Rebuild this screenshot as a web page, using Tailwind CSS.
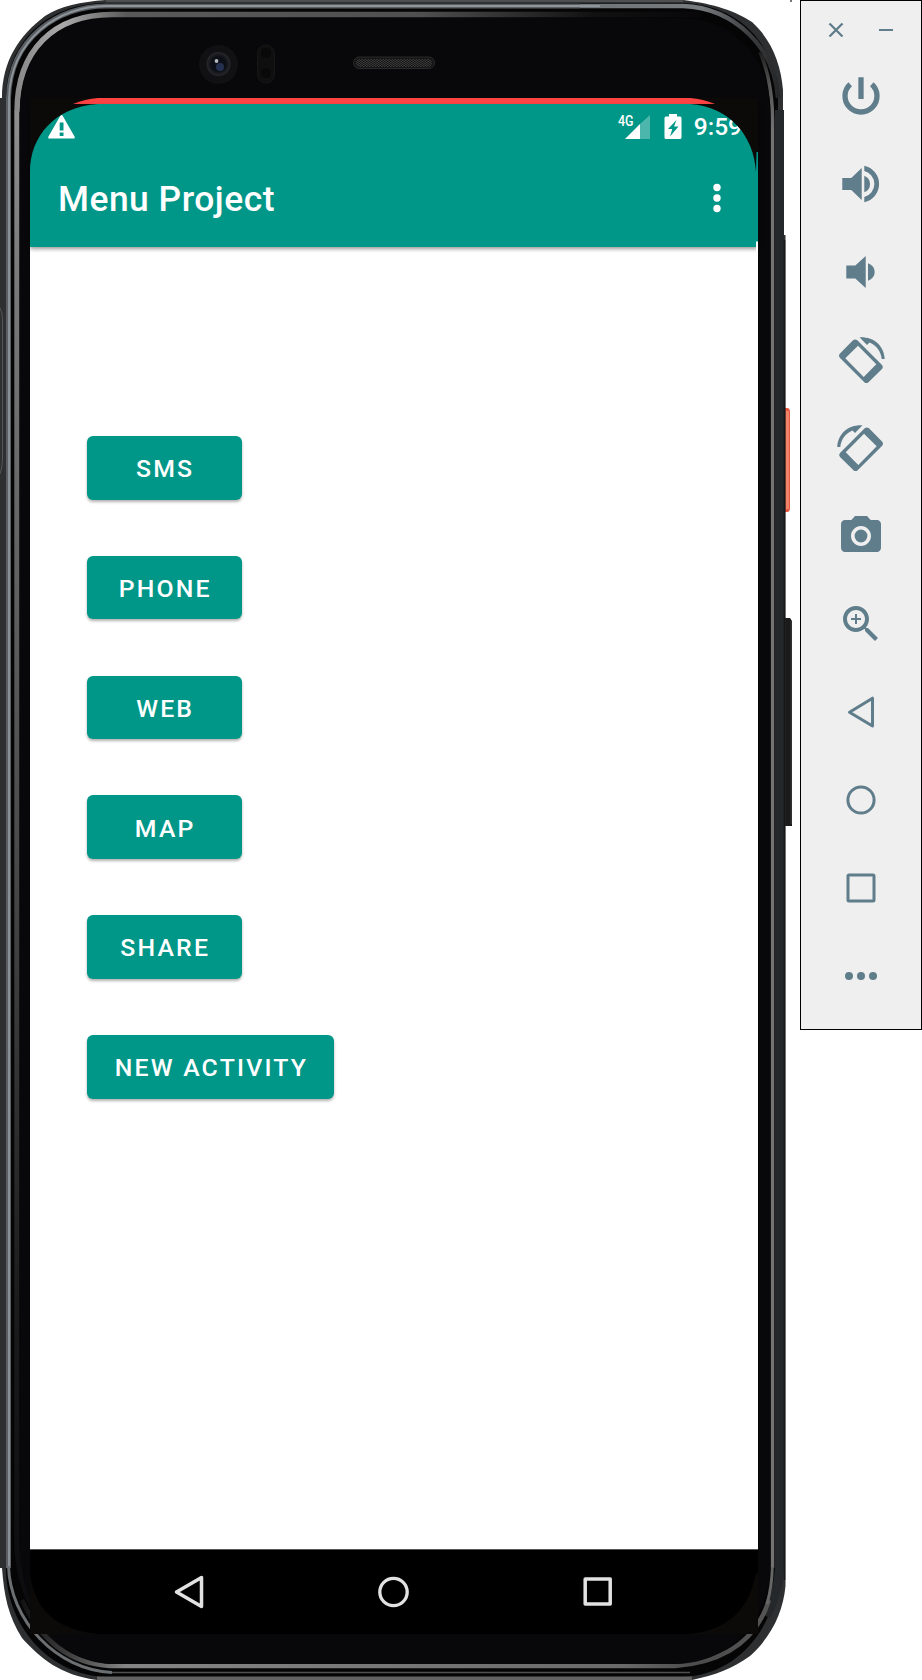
<!DOCTYPE html>
<html lang="en">
<head>
<meta charset="utf-8">
<title>Menu Project</title>
<script src="https://cdn.jsdelivr.net/npm/@tailwindcss/browser@4"></script>
</head>
<body class="bg-white font-['Roboto',sans-serif] font-medium text-white">
<div class="flex h-[1680px] w-[922px] overflow-hidden items-start">

  <!-- Phone -->
  <main class="relative isolate h-[1680px] w-[800px] shrink-0 pt-[98px] pl-[30px]">
    <svg class="absolute inset-0 -z-10" width="800" height="1680" viewBox="0 0 800 1680" fill="none">
      <defs>
        <linearGradient id="bezel" x1="0" x2="700" y1="0" y2="0" gradientUnits="userSpaceOnUse">
          <stop offset="0" stop-color="#7c7c7c"/><stop offset=".09" stop-color="#aaa"/><stop offset=".18" stop-color="#5a5a5a"/><stop offset=".6" stop-color="#505050"/><stop offset=".85" stop-color="#111"/><stop offset="1" stop-color="#08080b"/>
        </linearGradient>
        <linearGradient id="side" x1="0" x2="0" y1="112" y2="1600" gradientUnits="userSpaceOnUse">
          <stop offset="0" stop-color="#8f8f8f"/><stop offset=".1" stop-color="#7c7c7c"/><stop offset=".5" stop-color="#4a4a4a"/><stop offset=".8" stop-color="#1c1c1d"/><stop offset="1" stop-color="#0c0c0e"/>
        </linearGradient>
        <linearGradient id="rimtop" x1="580" x2="782" y1="0" y2="0" gradientUnits="userSpaceOnUse"><stop offset="0" stop-color="#6f757a"/><stop offset=".6" stop-color="#777b7e"/><stop offset=".85" stop-color="#3a3c3e"/><stop offset="1" stop-color="#222425"/></linearGradient>
        <linearGradient id="base" x1="20" x2="772" y1="0" y2="0" gradientUnits="userSpaceOnUse"><stop offset="0" stop-color="#111"/><stop offset=".07" stop-color="#444"/><stop offset=".14" stop-color="#858585"/><stop offset=".8" stop-color="#6a6a6a"/><stop offset=".9" stop-color="#4b4b4b"/><stop offset="1" stop-color="#555"/></linearGradient>
        <linearGradient id="right" x1="0" x2="0" y1="40" y2="130" gradientUnits="userSpaceOnUse"><stop offset="0" stop-color="#0a0a0b"/><stop offset=".5" stop-color="#555"/><stop offset="1" stop-color="#737373"/></linearGradient>
        <radialGradient id="lens" cx=".5" cy=".5" r=".5"><stop offset="0" stop-color="#0d0f19"/><stop offset=".6" stop-color="#0d0f17"/><stop offset="1" stop-color="#29292b"/></radialGradient>
        <pattern id="mesh" width="3" height="2" patternUnits="userSpaceOnUse"><path fill="#3a3a3a" d="M0 0h1.500v1H0zM1.500 1H3v1H1.500z"/></pattern>
      </defs>
      <!-- side buttons -->
      <path fill="#e8583f" d="M783 408h5q2 1 2 3v98q0 2-2 3h-5z"/>
      <path fill="#f2836b" d="M786 411h3v98h-3z"/>
      <path fill="#1b1b1b" d="M783 618h7l2 3v205h-9z"/>
      <path fill="#333" d="M790.500 621h1.500v203h-1.500z"/>
      <!-- body -->
      <path fill="#2d2f30" d="M0 98H2C2 60 20 35 45 16C61 6 80 2 106 0H683C715 4 735 11 752 22C772 40 781 65 783 90V235H785.500V1586C783 1612 772 1636 750 1656C732 1669 715 1675 692 1680H97C60 1675 40 1658 22 1638C8 1616 4 1595 2 1568H0Z"/>
      <path fill="#050506" d="M6 1568V98C6 42 48 3 106 3H683C740 5 776 45 778 98V1568C778 1625 740 1674 683 1677H106C48 1675 6 1625 6 1568Z"/>
      <path stroke="#585b5c" stroke-width="1.500" d="M106 1H683"/>
      <path stroke="#24282a" stroke-width="9" d="M779.500 110V1568Q778 1595 766 1616"/>
      <path stroke="#161718" stroke-width="1.500" d="M784.500 240V1580"/>
      <!-- outer rim -->
      <path stroke="#5a5e62" stroke-width="5" d="M8.500 1568V98C10 38 58 6 106 6H580"/>
      <path stroke="url(#rimtop)" stroke-width="4.500" d="M580 6H683C735 8 775 48 778 98"/>
      <path stroke="#8f969b" stroke-width="1.800" d="M9 1568V98C11 39 58 6 106 6H600"/>
      <path stroke="#6c6f71" stroke-width="3" d="M8.500 1566C10 1620 56 1670 112 1672.500"/>
      <path stroke="#505050" stroke-width="1.500" d="M112 1672.500H690"/>
      <path stroke="#626262" stroke-width="3.500" d="M97 1678.200H692"/>
      <!-- glass edge -->
      <path stroke="url(#bezel)" stroke-width="5.500" d="M17 112C17 50 54 14.500 112 14.500H700"/>
      <path stroke="url(#side)" stroke-width="5" d="M16.800 111.500V1540C17 1590 40 1630 66 1650"/>
      <path stroke="url(#base)" stroke-width="4.500" d="M22 1600Q50 1662 110 1666H675Q750 1660 769 1600"/>
      <path stroke="url(#right)" stroke-width="3.500" d="M772.500 1568V118Q772 80 760 52"/>
      <path stroke="#666" stroke-width="3" d="M772.300 1567Q772 1586 767 1604"/>
      <path fill="#08080b" d="M19.800 1540V112C21 52 56 18 112 18H683C735 19 770 60 770.500 112V1568C768 1625 725 1664 675 1664H110C60 1662 20 1615 19.800 1540Z"/>
      <!-- volume key edge on the left -->
      <path stroke="#50585a" stroke-width="1" d="M0 308Q2.500 312 2.500 320V458Q2.500 468 0 474"/>
      <!-- camera and sensors -->
      <circle cx="218.500" cy="64.500" r="19.500" fill="#111113"/>
      <circle cx="218.500" cy="64" r="12" fill="url(#lens)"/>
      <circle cx="220" cy="67" r="4" fill="#253050"/>
      <circle cx="216.500" cy="61" r="1.900" fill="#b7b7bf"/>
      <rect x="257.500" y="45" width="17" height="38" rx="8.500" fill="#0f0f10" stroke="#171718"/>
      <circle cx="266" cy="53" r="6" fill="#09090a" stroke="#131314"/><circle cx="266" cy="73" r="6" fill="#09090a" stroke="#131314"/>
      <!-- speaker -->
      <rect x="353.500" y="57" width="81" height="11.500" rx="5.500" fill="#161616" stroke="#292929"/>
      <rect x="356" y="59" width="76" height="8" rx="4" fill="url(#mesh)"/>
      <path fill="#777" d="M790 0h2v2h-2z"/>
    </svg>

    <section class="flex h-[1536px] w-[728px] flex-col bg-white">
      <div class="h-[6px] shrink-0 bg-[#ff4343]"></div>
      <header class="flex h-[143px] shrink-0 flex-col bg-[#009688] shadow-[0_2px_4px_0_rgba(0,0,0,0.4)]">
        <div class="flex h-11 items-center pt-0.5">
          <svg class="ml-[17px] -mt-px" width="29" height="26" viewBox="0 0 29 26"><path fill="#fff" d="M14.500 1Q15.300 1 15.800 2L27.800 23Q28 24.500 27 24.500H2Q1 24.500 1.200 23L13.200 2Q13.700 1 14.500 1Z"/><path fill="#009688" d="M12.700 8.500h3.800v8h-3.800zM12.700 18.500h3.800v3.500h-3.800z"/></svg>
          <div class="ml-auto flex items-center">
            <svg width="34" height="28" viewBox="0 0 34 28"><path fill="#fff" d="M7 26L22 11V26Z"/><path fill="#4db6ac" d="M22 11L32 2V26H22Z"/><text x="0" y="13" fill="#fff" font-size="14.500" textLength="15.500" lengthAdjust="spacingAndGlyphs">4G</text></svg>
            <svg class="ml-[12px]" width="18" height="28" viewBox="0 0 18 28"><path fill="#fff" d="M5 1h8v2.500h3q1.500 0 1.500 1.500v19.500q0 1.500-1.500 1.500H2Q.5 26 .5 24.500V5Q.5 3.500 2 3.500h3z"/><path fill="#009688" d="M12.500 7L4 16H8.300L6 23.500L14.500 13.500H10Z"/></svg>
            <span class="ml-[12px] mr-[16px] text-[24.500px] leading-7">9:59</span>
          </div>
        </div>
        <div class="flex flex-1 items-center justify-between pt-px pl-[28px] pr-[36px]">
          <h1 class="pt-px text-[35.400px] leading-10 tracking-[0.500px] font-medium">Menu Project</h1>
          <svg width="10" height="32" viewBox="0 0 10 32" fill="#fff"><circle cx="5" cy="5.500" r="3.700"/><circle cx="5" cy="16" r="3.700"/><circle cx="5" cy="26.500" r="3.700"/></svg>
        </div>
      </header>

      <div class="flex flex-1 flex-col items-start gap-[56.200px] pl-[56.600px] pt-[189px] text-[24.800px] tracking-[2.200px] [&>button]:h-[63.600px] [&>button]:min-w-[155px] [&>button]:rounded-[6px] [&>button]:bg-[#009688] [&>button]:pl-[2.200px] [&>button]:pt-[2px] [&>button]:shadow-[0_2px_3px_rgba(0,0,0,0.3)]">
        <button>SMS</button>
        <button>PHONE</button>
        <button>WEB</button>
        <button>MAP</button>
        <button>SHARE</button>
        <button class="w-[247.500px]">NEW ACTIVITY</button>
      </div>

      <nav class="flex h-[85px] shrink-0 items-center justify-center gap-[164px] border-t border-[#555] bg-black">
        <svg width="40" height="40" viewBox="0 0 40 40" fill="none" stroke="#e2e2e2" stroke-width="3.500" stroke-linejoin="round"><path d="M31.500 5.500V34.500L6.500 20Z"/></svg>
        <svg width="40" height="40" viewBox="0 0 40 40" fill="none" stroke="#e2e2e2" stroke-width="3.300"><circle cx="19.500" cy="20" r="13.700"/></svg>
        <svg width="40" height="40" viewBox="0 0 40 40" fill="none" stroke="#e2e2e2" stroke-width="3.500" stroke-linejoin="round"><rect x="7.200" y="7" width="25" height="25"/></svg>
      </nav>
    </section>

    <!-- rounded display corners -->
    <svg class="absolute left-[30px] top-[98px]" width="728" height="1536" viewBox="0 0 728 1536" fill="#0b0a08">
      <path d="M0 0H68Q55 1 43 6H68C25 9 0 38 0 74Z"/>
      <path d="M728 0H660Q673 1 685 6H660C700 9 724 38 726 74L726.500 54H728Z"/>
      <path d="M0 1475Q6 1530 68 1536H0Z"/>
      <path d="M726 1475Q716 1530 660 1536H728V1475Z"/>
      <path fill="#fff" d="M726 143.500h2v10h-2z"/>
    </svg>
  </main>

  <!-- Emulator toolbar -->
  <aside class="flex h-[1030px] w-[122px] shrink-0 flex-col items-center border border-black bg-[#efefef] text-[#607d8b]">
    <div class="flex h-[51px] w-full shrink-0 justify-between pl-[27px] pr-[27px] pt-[21px]">
      <svg width="16" height="16" viewBox="0 0 16 16" stroke="currentColor" stroke-width="2.300"><path d="M1.500 1.500l13 13M14.500 1.500l-13 13"/></svg>
      <svg width="16" height="16" viewBox="0 0 16 16" stroke="currentColor" stroke-width="2"><path d="M1 8h14"/></svg>
    </div>
    <div class="-ml-px flex flex-col gap-10 pt-5 [&>svg]:size-12 [&>svg]:overflow-visible">
      <svg viewBox="0 0 48 48" fill="none" stroke="currentColor" stroke-width="5.300"><path d="M13.200 12.200A16 16 0 1 0 34.800 12.200M24 5.300V27"/></svg>
      <svg viewBox="0 0 48 48" fill="currentColor"><path d="M5.300 18H14.300L24.700 8V40L14.300 30H5.300ZM27.300 15.700Q33 18 33 24T27.300 32.300ZM27.300 5.800A18.600 18.600 0 0 1 27.300 42.200V36.900A13.300 13.300 0 0 0 27.300 11.100Z"/></svg>
      <svg viewBox="0 0 48 48" fill="currentColor"><path d="M9.300 17.500H18.300L28.700 8V40L18.300 30.500H9.300ZM31 15.300Q37.700 18 37.700 24T31 32.700Z"/></svg>
      <svg viewBox="0 0 48 48" fill="currentColor"><path fill-rule="evenodd" d="M16 4.200Q18.300 2.600 20.300 4.300L45 29Q46.800 31 45 33L31.500 46.200Q29.300 48 27.300 46.200L3 22Q1 19.700 3 17.500ZM21 9.700L8.300 22.300L26.700 41L39.300 28.300Z"/><path d="M22.500 1.300C36 .5 47 9 47.700 23H44.700C44 15.500 39.500 9 32.500 6.400L30 8.900Z"/></svg>
      <svg viewBox="0 0 48 48" fill="currentColor"><g transform="matrix(-1 0 0 1 48 0)"><path fill-rule="evenodd" d="M16 4.200Q18.300 2.600 20.300 4.300L45 29Q46.800 31 45 33L31.500 46.200Q29.300 48 27.300 46.200L3 22Q1 19.700 3 17.500ZM21 9.700L8.300 22.300L26.700 41L39.300 28.300Z"/><path d="M22.500 1.300C36 .5 47 9 47.700 23H44.700C44 15.500 39.500 9 32.500 6.400L30 8.900Z"/></g></svg>
      <svg viewBox="0 0 24 24" fill="currentColor"><circle cx="12" cy="12" r="3.200"/><path d="M9 2L7.170 4H4c-1.100 0-2 .9-2 2v12c0 1.100.9 2 2 2h16c1.100 0 2-.9 2-2V6c0-1.100-.9-2-2-2h-3.170L15 2H9zm3 15c-2.760 0-5-2.240-5-5s2.240-5 5-5 5 2.240 5 5-2.240 5-5 5z"/></svg>
      <svg viewBox="0 0 24 24" fill="currentColor"><path d="M15.500 14h-.79l-.28-.27C15.410 12.590 16 11.110 16 9.500 16 5.910 13.090 3 9.500 3S3 5.910 3 9.500 5.910 16 9.500 16c1.610 0 3.090-.59 4.230-1.570l.27.28v.79l5 4.990L20.490 19l-4.990-5zm-6 0C7.010 14 5 11.990 5 9.500S7.010 5 9.500 5 14 7.010 14 9.500 11.990 14 9.500 14zm2.500-4h-2v2H9v-2H7V9h2V7h1v2h2v1z"/></svg>
      <svg viewBox="0 0 48 48" fill="none" stroke="currentColor" stroke-width="3" stroke-linejoin="round"><path d="M35.500 10.200V38L12.500 24.200Z"/></svg>
      <svg viewBox="0 0 48 48" fill="none" stroke="currentColor" stroke-width="3"><circle cx="24" cy="24" r="13.100"/></svg>
      <svg viewBox="0 0 48 48" fill="none" stroke="currentColor" stroke-width="3" stroke-linejoin="round"><rect x="11" y="11" width="26" height="26" rx="1"/></svg>
      <svg viewBox="0 0 48 48" fill="currentColor"><circle cx="12" cy="24" r="4"/><circle cx="24" cy="24" r="4"/><circle cx="36" cy="24" r="4"/></svg>
    </div>
  </aside>
</div>
</body>
</html>
